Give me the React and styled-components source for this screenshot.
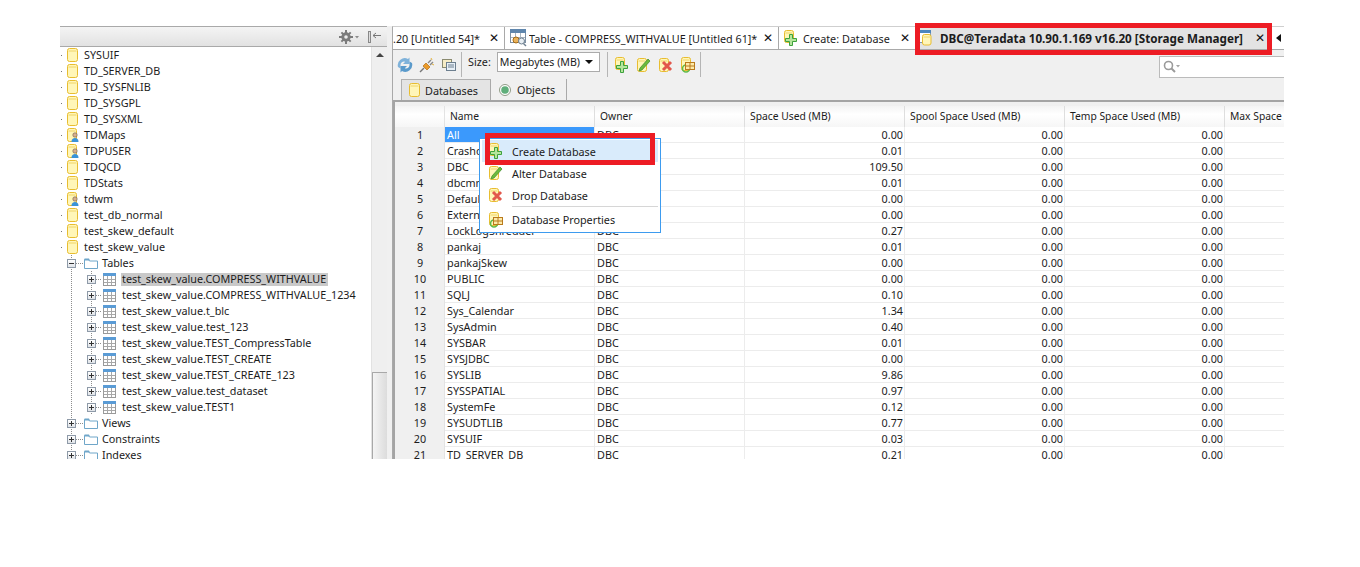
import React from 'react';
import styled, { createGlobalStyle } from 'styled-components';

const Global = createGlobalStyle`
  html, body { margin: 0; padding: 0; background: #fff; }
  * { box-sizing: border-box; }
`;

const Stage = styled.div`
  position: relative;
  width: 1360px;
  height: 567px;
  padding: 26px 0 0 60px;
  background: #fff;
  font-family: "Noto Sans", "Liberation Sans", sans-serif;
  font-size: 10.8px;
  color: #1c1c1c;
  overflow: hidden;
`;
const Win = styled.div`
  display: flex;
  width: 1224px;
  height: 433px;
  overflow: hidden;
`;

/* left tree */
const Left = styled.div`
  width: 327px;
  flex: none;
  display: flex;
  flex-direction: column;
`;
const LeftHead = styled.div`
  height: 21px;
  flex: none;
  display: flex;
  align-items: center;
  justify-content: flex-end;
  gap: 8px;
  padding-right: 5px;
  border-top: 1px solid #a9a9a9;
  border-bottom: 1px solid #a9a9a9;
  background: linear-gradient(#f4f4f4, #e2e2e2);
`;
const LeftBody = styled.div`
  flex: 1;
  display: flex;
  min-height: 0;
`;
const Tree = styled.div`
  flex: 1;
  min-width: 0;
  overflow: hidden;
`;
const guideBg = (g) => {
  const xs = g === 'branch' ? [11, 31] : g === 'trunk' ? [11] : [];
  if (!xs.length) return '';
  return `
    background-image: ${xs.map(() => 'linear-gradient(#8d8d8d 50%, transparent 50%)').join(',')};
    background-size: 1px 2px;
    background-repeat: repeat-y;
    background-position: ${xs.map((x) => `${x}px 0`).join(',')};
  `;
};
const TreeRow = styled.div`
  height: 16px;
  display: flex;
  align-items: center;
  white-space: nowrap;
  padding-left: ${(p) => p.$pad}px;
  ${(p) => guideBg(p.$guides)}
`;
const RootDot = styled.span`
  width: 1px;
  height: 1px;
  margin-right: 5px;
  background: #777;
  flex: none;
`;
const Expander = styled.span`
  position: relative;
  flex: none;
  width: 9px;
  height: 9px;
  border: 1px solid #8e9aa8;
  background: linear-gradient(#fff, #dfe3e8);
  &::before {
    content: '';
    position: absolute;
    left: 1px;
    top: 3px;
    width: 5px;
    height: 1px;
    background: #333;
  }
  &::after {
    content: '';
    display: ${(p) => (p.$open ? 'none' : 'block')};
    position: absolute;
    left: 3px;
    top: 1px;
    width: 1px;
    height: 5px;
    background: #333;
  }
`;
const Dash = styled.span`
  flex: none;
  width: ${(p) => p.$w}px;
  height: 1px;
  margin-right: 1px;
  background-image: linear-gradient(90deg, #8d8d8d 50%, transparent 50%);
  background-size: 2px 1px;
`;
const NodeText = styled.span`
  margin-left: ${(p) => p.$gap}px;
  line-height: 11px;
  height: 13px;
  display: block;
  padding-left: 1px;
  width: ${(p) => (p.$sel ? '207px' : 'auto')};
  background: ${(p) => (p.$sel ? '#c9c9c9' : 'transparent')};
`;
const Scroll = styled.div`
  width: 16px;
  flex: none;
  background: #efefef;
  display: flex;
  flex-direction: column;
  align-items: center;
  border-left: 1px solid #e2e2e2;
`;
const ScrollUp = styled.span`
  margin-top: 6px;
  width: 0;
  height: 0;
  border-left: 4px solid transparent;
  border-right: 4px solid transparent;
  border-bottom: 4px solid #444;
`;
const Thumb = styled.span`
  margin-top: auto;
  width: 16px;
  height: 87px;
  border: 1px solid #a8a8a8;
  border-bottom: 0;
  border-radius: 1px 1px 0 0;
  background: linear-gradient(90deg, #f4f4f4, #dcdcdc);
`;

/* right side */
const Sash = styled.div`
  width: 5px;
  flex: none;
  background: #f0f0f0;
`;
const Right = styled.div`
  flex: 1;
  min-width: 0;
  display: flex;
  flex-direction: column;
  background: #f0f0f0;
`;
const TabStrip = styled.div`
  height: 24px;
  flex: none;
  display: flex;
  background: #fff;
  border-top: 1px solid #cfcfcf;
  border-bottom: 1px solid #a9a9a9;
  border-left: 1px solid #a9a9a9;
  overflow: hidden;
`;
const EdTab = styled.div`
  flex: none;
  width: ${(p) => p.$w}px;
  height: 100%;
  display: flex;
  align-items: center;
  padding-left: ${(p) => p.$pad}px;
  gap: ${(p) => p.$gap || 2}px;
  white-space: nowrap;
  font-weight: ${(p) => (p.$active ? 700 : 400)};
  font-size: ${(p) => (p.$active ? '11.7px' : '10.8px')};
  background: ${(p) => (p.$active ? '#e3e3e3' : '#fff')};
  border-right: ${(p) => (p.$sep ? '1px solid #a9a9a9' : '0')};
`;
const TabLabel = styled.span`
  flex: 1;
  overflow: hidden;
`;
const TabClose = styled.span`
  flex: none;
  width: ${(p) => p.$r}px;
  font-size: 12px;
  font-weight: 400;
  color: #111;
  font-family: "DejaVu Sans", sans-serif;
`;
const TabArrow = styled.span`
  margin: 7px 0 0 ${(p) => p.$m}px;
  width: 0;
  height: 0;
  flex: none;
  border-top: 4px solid transparent;
  border-bottom: 4px solid transparent;
  border-right: 5px solid #111;
`;
const Content = styled.div`
  flex: 1;
  min-height: 0;
  display: flex;
  flex-direction: column;
  border-left: 1px solid #a9a9a9;
`;
const Toolbar = styled.div`
  height: 29px;
  flex: none;
  display: flex;
  align-items: center;
  padding-left: 4px;
`;
const ToolIcons = styled.div`
  display: flex;
  align-items: center;
  gap: ${(p) => p.$gap}px;
`;
const ToolSep = styled.span`
  width: 1px;
  height: 25px;
  background: #b5b5b5;
  flex: none;
  margin: 0 ${(p) => p.$r}px 0 ${(p) => p.$l}px;
`;
const SizeLabel = styled.span`
  margin: 0 6px 6px 0;
`;
const Select = styled.div`
  width: 103px;
  height: 20px;
  flex: none;
  display: flex;
  align-items: center;
  justify-content: space-between;
  margin-bottom: 6px;
  padding: 0 4px 0 2px;
  font-size: 10.6px;
  background: #fff;
  border: 1px solid #ababab;
`;
const Caret = styled.span`
  width: 0;
  height: 0;
  border-left: 4px solid transparent;
  border-right: 4px solid transparent;
  border-top: 4px solid #111;
  margin-right: 2px;
`;
const Search = styled.div`
  margin: 5px 0 0 auto;
  width: 125px;
  height: 22px;
  flex: none;
  display: flex;
  align-items: center;
  gap: 1px;
  padding-left: 3px;
  background: #fff;
  border: 1px solid #bbb;
  border-right: 0;
`;
const SubTabs = styled.div`
  height: 21px;
  flex: none;
  display: flex;
  padding-left: 8px;
`;
const SubTab = styled.div`
  width: ${(p) => p.$w}px;
  display: flex;
  align-items: center;
  padding-left: ${(p) => p.$pad}px;
  gap: ${(p) => p.$gap}px;
  background: ${(p) => (p.$active ? '#e4e4e4' : 'transparent')};
  border: ${(p) => (p.$active ? '1px solid #b0b0b0' : '0')};
  border-bottom: 0;
  border-right: 1px solid #a9a9a9;
`;
const Frame = styled.div`
  flex: 1;
  min-height: 0;
  border-top: 2px solid #a4a4a4;
  border-left: 2px solid #a4a4a4;
  padding-top: 4px;
  overflow: hidden;
`;
const Row = styled.div`
  display: grid;
  grid-template-columns: 50px 150px 150px 160px 160px 160px 100px;
  height: ${(p) => (p.$head ? '21px' : '16px')};
  background: #fff;
  ${(p) => (p.$head ? 'background: linear-gradient(#f4f4f4 0, #fff 40%, #f6f6f6);' : '')}
  align-items: stretch;
`;
const Gutter = styled.div`
  background: ${(p) => (p.$head ? 'transparent' : '#f0f0f0')};
  text-align: center;
  line-height: 16px;
  padding-left: 1px;
  border-right: 1px solid #e3e3e3;
`;
const HeadCell = styled.div`
  padding-left: 5px;
  font-size: 10.3px;
  line-height: 20px;
  white-space: nowrap;
  overflow: hidden;
  border-right: 1px solid #dedede;
`;
const Cell = styled.div`
  padding: 0 ${(p) => (p.$num ? '1px' : '0')} 0 ${(p) => (p.$num ? '0' : '2px')};
  line-height: 15px;
  text-align: ${(p) => (p.$num ? 'right' : 'left')};
  white-space: nowrap;
  overflow: hidden;
  border-right: 1px solid #ececec;
  border-bottom: 1px solid #ececec;
  background: ${(p) => (p.$sel ? '#3b99fc' : 'transparent')};
  color: ${(p) => (p.$sel ? '#fff' : 'inherit')};
`;

/* overlay parts */
const Menu = styled.div`
  position: absolute;
  left: 479px;
  top: 138px;
  width: 182px;
  height: 95px;
  background: #fff;
  border: 1px solid #3d9bef;
  padding: 1px 2px;
`;
const MenuItem = styled.div`
  height: ${(p) => p.$h}px;
  display: flex;
  align-items: center;
  padding-left: 6px;
  gap: 9px;
  background: ${(p) => (p.$hot ? '#d9ebfb' : 'transparent')};
`;
const MenuDiv = styled.div`
  height: 1px;
  margin-left: 30px;
  background: #d6d6d6;
`;
const Mark = styled.div`
  position: absolute;
  left: ${(p) => p.$x}px;
  top: ${(p) => p.$y}px;
  width: ${(p) => p.$w}px;
  height: ${(p) => p.$h}px;
  border: 5px solid #ed1c24;
`;

/* icons */
const Ico = ({ w = 16, h = 16, children }) => (
  <svg width={w} height={h} viewBox={`0 0 ${w} ${h}`} style={{ flex: 'none', display: 'block' }}>{children}</svg>
);
const Can = ({ x = 0.5, y = 0.5, w = 10, h = 13 }) => (
  <g>
    <rect x={x} y={y} width={w} height={h} rx="2" fill="#fff6b8" stroke="#e8bd30" />
    <path d={`M${x + 1} ${y + 2.5}H${x + w - 1}`} stroke="#f0d468" />
  </g>
);
const DbIcon = () => <Ico w={11} h={14}><Can /></Ico>;
const UserDbIcon = () => (
  <Ico w={12} h={14}>
    <Can x={0.5} y={0.5} w={9} h={13} />
    <circle cx="8" cy="7" r="2.2" fill="#d9b08c" stroke="#6b5a48" strokeWidth=".6" />
    <path d="M4.5 14c0-3 1.5-4 3.5-4s3.5 1 3.5 4z" fill="#3a93d8" />
  </Ico>
);
const FolderIcon = () => (
  <Ico w={14} h={12}>
    <path d="M.5 2.5h4l1 1.5h8v7.5H.5z" fill="#fff" stroke="#6fa6c9" />
    <path d="M.5 1.5h4.5l1 2H.5z" fill="#6fa6c9" />
  </Ico>
);
const TableIcon = () => (
  <Ico w={13} h={13}>
    <rect x=".5" y=".5" width="12" height="12" fill="#fff" stroke="#9a9a9a" />
    <rect x="0" y="0" width="13" height="3" fill="#5a9bd5" />
    <path d="M4.5 3v9M8.5 3v9M1 6.5h11M1 9.5h11" stroke="#a8a8a8" />
  </Ico>
);
const Plus = ({ x = 0, y = 0 }) => (
  <path transform={`translate(${x} ${y})`} d="M4.5.5h3v4h4v3h-4v4h-3v-4h-4v-3h4z" fill="#b6e59c" stroke="#3da23d" />
);
const CreateIcon = () => <Ico w={15} h={16}><Can x={1.5} y={0.5} w={9} h={12} /><Plus x={2} y={4} /></Ico>;
const AlterIcon = () => (
  <Ico w={15} h={16}>
    <Can x={1.5} y={1.5} w={9} h={13} />
    <path d="M4 11l8-9 2 2-8 9-3 1z" fill="#6cbb3c" stroke="#3c8a2a" strokeWidth=".7" />
  </Ico>
);
const DropIcon = () => (
  <Ico w={15} h={16}>
    <Can x={1.5} y={1.5} w={9} h={13} />
    <path d="M5 5l8 8M13 5l-8 8" stroke="#e2574c" strokeWidth="3" />
  </Ico>
);
const PropsIcon = () => (
  <Ico w={15} h={16}>
    <Can x={1.5} y={0.5} w={9} h={13} />
    <circle cx="6" cy="11.5" r="3.5" fill="none" stroke="#5fba4a" strokeWidth="1.6" />
    <rect x="5.5" y="5.5" width="9" height="7" fill="#fdeaa8" stroke="#b97a1c" />
    <path d="M10 5.5v7M5.5 9h9" stroke="#b97a1c" />
  </Ico>
);
const RefreshIcon = () => (
  <Ico w={16} h={16}>
    <path d="M1 10a7 7 0 0 1 10-8l1.500-1.500v6.500h-6.500l2.200-2.200a3.500 3.500 0 0 0-4.700 3.700v3z" fill="#7fb2da" />
    <path d="M15 6a7 7 0 0 1-10 8l-1.500 1.500v-6.500h6.500l-2.200 2.200a3.500 3.500 0 0 0 4.700-3.700v-3z" fill="#5a9acb" />
  </Ico>
);
const PlugIcon = () => (
  <Ico w={16} h={16}>
    <path d="M1 15l4-4" stroke="#777" strokeWidth="1.4" />
    <path d="M4 9l3-3 4 4-3 3z" fill="#e99a2b" stroke="#b56d12" strokeWidth=".7" />
    <path d="M9 6l3-3M11 8l3-3" stroke="#888" strokeWidth="1.4" />
    <path d="M12 1l1 2M15 8l-2-1" stroke="#e3b23c" />
  </Ico>
);
const CopyIcon = () => (
  <Ico w={16} h={16}>
    <rect x="1.500" y="2.500" width="9" height="8" fill="#f6ecc6" stroke="#8a8a70" />
    <rect x="5.500" y="5.500" width="9" height="8" fill="#e8f0f7" stroke="#6d7f8f" />
    <path d="M7 8h6M7 10h6" stroke="#6d7f8f" />
  </Ico>
);
const TabTableIcon = () => (
  <Ico w={17} h={18}>
    <rect x=".5" y=".5" width="15" height="13" fill="#fff" stroke="#7c8fa3" />
    <rect x="0" y="0" width="16" height="4" fill="#5f86ad" />
    <path d="M5.500 4v9M10.500 4v9M1 8.500h14" stroke="#a9b4bf" />
    <circle cx="6" cy="11" r="3" fill="#eab25b" stroke="#a56a14" />
    <circle cx="11.500" cy="12" r="3" fill="#e8eef3" stroke="#6d7f8f" />
    <path d="M13.500 14.500l2.500 2.500" stroke="#6d7f8f" strokeWidth="1.400" />
  </Ico>
);
const DbcIcon = () => (
  <Ico w={13} h={16}>
    <rect x=".5" y=".5" width="11" height="12" fill="#fff" stroke="#8199b0" />
    <rect x="0" y="0" width="12" height="3" fill="#4d86bd" />
    <Can x={3.500} y={4.500} w={8.500} h={10.500} />
  </Ico>
);
const GearIcon = () => (
  <Ico w={21} h={14}>
    <g fill="#7b7b7b">
      <circle cx="7" cy="7" r="4.700" />
      <path d="M6 0h2v3H6zM6 11h2v3H6zM0 6h3v2H0zM11 6h3v2h-3zM1.700 3.100l1.400-1.400 2 2-1.400 1.400zM9 10.300l1.400-1.400 2 2-1.400 1.400zM1.700 10.900l2-2 1.400 1.400-2 2zM9 3.700l2-2 1.400 1.400-2 2z" />
    </g>
    <circle cx="7" cy="7" r="1.800" fill="#ececec" />
    <path d="M16 6h4l-2 2.500z" fill="#8b8b8b" />
  </Ico>
);
const PinIcon = () => (
  <Ico w={14} h={14}>
    <rect x=".5" y="1.500" width="2" height="11" fill="#ddd" stroke="#888" />
    <path d="M5 5.500h8M5 5.500l3-2.500M5 5.500l3 2.500" stroke="#777" fill="none" />
  </Ico>
);
const ObjectsIcon = () => (
  <Ico w={12} h={12}>
    <circle cx="6" cy="6" r="5.500" fill="#fff" stroke="#8f9a86" />
    <circle cx="6" cy="6" r="3.800" fill="#5fae7a" />
  </Ico>
);
const SearchIcon = () => (
  <Ico w={18} h={14}>
    <circle cx="5.500" cy="5.500" r="4" fill="#fff" stroke="#9a9a9a" strokeWidth="1.600" />
    <path d="M8.500 8.500l3.500 3.500" stroke="#9a9a9a" strokeWidth="2" />
    <path d="M13 5h4l-2 2.500z" fill="#a5a5a5" />
  </Ico>
);

const rootNodes = [
  ['SYSUIF'], ['TD_SERVER_DB'], ['TD_SYSFNLIB'], ['TD_SYSGPL'], ['TD_SYSXML'],
  ['TDMaps', 1], ['TDPUSER', 1], ['TDQCD'], ['TDStats'], ['tdwm', 1],
  ['test_db_normal'], ['test_skew_default'], ['test_skew_value'],
];
const tables = [
  'COMPRESS_WITHVALUE', 'COMPRESS_WITHVALUE_1234', 't_blc', 'test_123', 'TEST_CompressTable',
  'TEST_CREATE', 'TEST_CREATE_123', 'test_dataset', 'TEST1',
];
const data = [
  ['All', '0.00'], ['Crashdumps', '0.01'], ['DBC', '109.50'], ['dbcmngr', '0.01'], ['Default', '0.00'],
  ['External_AP', '0.00'], ['LockLogShredder', '0.27'], ['pankaj', '0.01'], ['pankajSkew', '0.00'],
  ['PUBLIC', '0.00'], ['SQLJ', '0.10'], ['Sys_Calendar', '1.34'], ['SysAdmin', '0.40'], ['SYSBAR', '0.01'],
  ['SYSJDBC', '0.00'], ['SYSLIB', '9.86'], ['SYSSPATIAL', '0.97'], ['SystemFe', '0.12'],
  ['SYSUDTLIB', '0.77'], ['SYSUIF', '0.03'], ['TD_SERVER_DB', '0.21'],
];

export default function App() {
  return (
    <Stage>
      <Global />
      <Win>
        <Left>
          <LeftHead><GearIcon /><PinIcon /></LeftHead>
          <LeftBody>
            <Tree>
              {rootNodes.map(([name, user]) => (
                <TreeRow key={name} $pad={1}>
                  <RootDot />
                  {user ? <UserDbIcon /> : <DbIcon />}
                  <NodeText $gap={user ? 4 : 5}>{name}</NodeText>
                </TreeRow>
              ))}
              <TreeRow $pad={7} $guides="trunk">
                <Expander $open />
                <Dash $w={7} />
                <FolderIcon />
                <NodeText $gap={3}>Tables</NodeText>
              </TreeRow>
              {tables.map((t, i) => (
                <TreeRow key={t} $pad={27} $guides="branch">
                  <Expander />
                  <Dash $w={6} />
                  <TableIcon />
                  <NodeText $gap={5} $sel={i === 0}>test_skew_value.{t}</NodeText>
                </TreeRow>
              ))}
              {['Views', 'Constraints', 'Indexes'].map((f) => (
                <TreeRow key={f} $pad={7} $guides="trunk">
                  <Expander />
                  <Dash $w={7} />
                  <FolderIcon />
                  <NodeText $gap={3}>{f}</NodeText>
                </TreeRow>
              ))}
            </Tree>
            <Scroll><ScrollUp /><Thumb /></Scroll>
          </LeftBody>
        </Left>
        <Sash />
        <Right>
          <TabStrip>
            <EdTab $w={112} $pad={0} $sep>
              <TabLabel>.20 [Untitled 54]*</TabLabel>
              <TabClose $r={15}>✕</TabClose>
            </EdTab>
            <EdTab $w={274} $pad={5} $sep>
              <TabTableIcon />
              <TabLabel>Table - COMPRESS_WITHVALUE [Untitled 61]*</TabLabel>
              <TabClose $r={15}>✕</TabClose>
            </EdTab>
            <EdTab $w={137} $pad={4} $gap={5}>
              <CreateIcon />
              <TabLabel>Create: Database</TabLabel>
              <TabClose $r={16}>✕</TabClose>
            </EdTab>
            <EdTab $w={352} $pad={3} $gap={8} $active>
              <DbcIcon />
              <TabLabel>DBC@Teradata 10.90.1.169 v16.20 [Storage Manager]</TabLabel>
              <TabClose $r={13}>✕</TabClose>
            </EdTab>
            <TabArrow $m={8} />
          </TabStrip>
          <Content>
            <Toolbar>
              <ToolIcons $gap={6}><RefreshIcon /><PlugIcon /><CopyIcon /></ToolIcons>
              <ToolSep $l={4} $r={6} />
              <SizeLabel>Size:</SizeLabel>
              <Select>Megabytes (MB)<Caret /></Select>
              <ToolSep $l={7} $r={6} />
              <ToolIcons $gap={7}><CreateIcon /><AlterIcon /><DropIcon /><PropsIcon /></ToolIcons>
              <ToolSep $l={5} $r={0} />
              <Search><SearchIcon /></Search>
            </Toolbar>
            <SubTabs>
              <SubTab $w={90} $pad={7} $gap={5} $active><DbIcon />Databases</SubTab>
              <SubTab $w={76} $pad={8} $gap={6}><ObjectsIcon />Objects</SubTab>
            </SubTabs>
            <Frame>
              <Row $head>
                <Gutter $head />
                {['Name', 'Owner', 'Space Used (MB)', 'Spool Space Used (MB)', 'Temp Space Used (MB)', 'Max Space'].map((h) => (
                  <HeadCell key={h}>{h}</HeadCell>
                ))}
              </Row>
              {data.map(([name, used], i) => (
                <Row key={name}>
                  <Gutter>{i + 1}</Gutter>
                  <Cell $sel={i === 0}>{name}</Cell>
                  <Cell>DBC</Cell>
                  <Cell $num>{used}</Cell>
                  <Cell $num>0.00</Cell>
                  <Cell $num>0.00</Cell>
                  <Cell />
                </Row>
              ))}
            </Frame>
          </Content>
        </Right>
      </Win>
      <Menu>
        <MenuItem $h={22} $hot><CreateIcon />Create Database</MenuItem>
        <MenuItem $h={22}><AlterIcon />Alter Database</MenuItem>
        <MenuItem $h={22}><DropIcon />Drop Database</MenuItem>
        <MenuDiv />
        <MenuItem $h={25}><PropsIcon />Database Properties</MenuItem>
      </Menu>
      <Mark $x={485} $y={133} $w={170} $h={32} />
      <Mark $x={915} $y={23} $w={357} $h={32} />
    </Stage>
  );
}
